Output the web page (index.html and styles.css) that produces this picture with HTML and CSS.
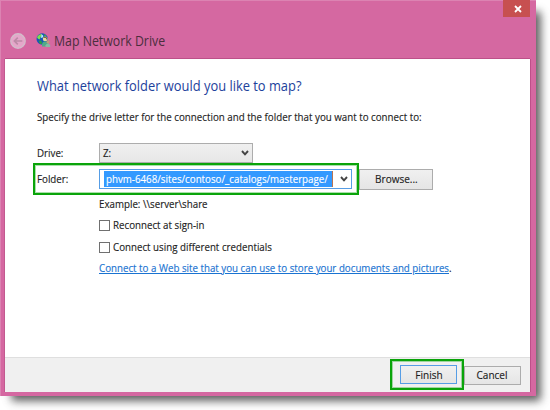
FILE: index.html
```html
<!DOCTYPE html>
<html lang="en">
<head>
<meta charset="utf-8">
<title>Map Network Drive</title>
<link rel="stylesheet" href="styles.css">
</head>
<body>
<main class="window">
  <header class="titlebar">
    <button class="close" aria-label="Close">
      <svg width="8" height="8" viewBox="0 0 8 8"><path d="M1 1 7 7M7 1 1 7" stroke="#fff" stroke-width="1.8" fill="none"/></svg>
    </button>
    <div class="caption">
      <svg class="back" width="16" height="16" viewBox="0 0 16 16" fill="none">
        <circle cx="8" cy="8" r="7.2" fill="#e5a6c9" stroke="#d3bcca" stroke-width="1.4"/>
        <path d="M12.3 8H4.5M7.8 4.6 4.4 8l3.4 3.4" stroke="#bd8aa6" stroke-width="1.7"/>
      </svg>
      <svg class="globe" width="15" height="15" viewBox="0 0 15 15">
        <circle cx="6.2" cy="6" r="5.7" fill="#1656b8"/>
        <path d="M1 4Q3 .8 6 1L5 3.4 3.5 6.4 1.8 5.6Z" fill="#7ee04c"/>
        <path d="M2.5 7.5 5.5 7.8 6.2 10.8 4 11Z" fill="#2c9c45"/>
        <path d="M5.5 1.2Q7.8 2 7.2 4.2L5 5Z" fill="#b9efff"/>
        <path d="M7.8 1.2 10.5 2.6 8.5 3.4Z" fill="#44a83e"/>
        <circle cx="9.2" cy="5.9" r="2.4" fill="#ead7a0"/>
        <path d="M7 5Q8.5 2.5 11.2 4.7L11 7 9.5 4.8Z" fill="#6f5c38"/>
        <path d="M6 13.4V11Q6.5 8.3 9 8.2 11.5 8.4 12.2 10.7V13.4Z" fill="#4eaa88"/>
        <circle cx="12" cy="8.8" r="1.6" fill="#c09c78"/>
        <path d="M9.6 14V12.3Q10.2 10.4 12.2 10.5 14 10.8 14.2 12.5V14Z" fill="#86b9a3"/>
      </svg>
      <h1 class="title">Map Network Drive</h1>
    </div>
  </header>
  <section class="content">
    <h2 class="heading">What network folder would you like to map?</h2>
    <p class="intro narrow">Specify the drive letter for the connection and the folder that you want to connect to:</p>
    <div class="row drive">
      <span class="label narrow">Drive:</span>
      <div class="combo drive-combo"><span class="narrow">Z:</span>
        <svg class="chevron" width="8" height="6" viewBox="0 0 8 6"><path d="M1 1 4 4.3 7 1" fill="none" stroke="#444" stroke-width="1.9"/></svg>
      </div>
    </div>
    <div class="row folder">
      <div class="highlight folder-highlight">
        <span class="label narrow">Folder:</span>
        <div class="combo folder-combo"><span class="selection"><span class="path narrow">phvm-6468/sites/contoso/_catalogs/masterpage/</span></span>
          <svg class="chevron" width="8" height="6" viewBox="0 0 8 6"><path d="M1 1 4 4.3 7 1" fill="none" stroke="#444" stroke-width="1.9"/></svg>
        </div>
      </div>
      <button class="button browse"><span>Browse...</span></button>
    </div>
    <div class="options">
      <p class="example narrow">Example: \\server\share</p>
      <label class="check"><i class="box"></i><span class="narrow">Reconnect at sign-in</span></label>
      <label class="check"><i class="box"></i><span class="narrow">Connect using different credentials</span></label>
      <p class="website narrow"><a>Connect to a Web site that you can use to store your documents and pictures</a>.</p>
    </div>
  </section>
  <footer class="footer">
    <div class="highlight finish-highlight"><button class="button finish"><span>Finish</span></button></div>
    <button class="button cancel"><span>Cancel</span></button>
  </footer>
</main>
</body>
</html>
```
FILE: styles.css
```css
* { box-sizing: border-box; }
body {
  margin: 0;
  width: 550px;
  height: 410px;
  overflow: hidden;
  background: #fff;
  color: #1c1c1c;
  font: 11px/16px "Open Sans", "Noto Sans", sans-serif;
  white-space: nowrap;
  -webkit-text-stroke: .15px;
}
h1, h2, p { margin: 0; font-weight: 400; }
svg { display: block; flex: none; }
.narrow { display: block; transform: scaleX(.886); transform-origin: 0 50%; }
.window {
  display: flex;
  flex-direction: column;
  width: 536px;
  height: 396px;
  padding: 0 6px 4px 5px;
  background: #d568a1;
  box-shadow: inset 1px 1px 0 #dc83b2, 8px 8px 8px -4px rgba(0,0,0,.55), 8px 9px 10px -3px rgba(0,0,0,.2);
}
.titlebar { display: flex; flex-direction: column; height: 59px; border-bottom: 1px solid #bd5089; }
.close {
  display: flex;
  align-items: center;
  justify-content: center;
  align-self: flex-end;
  width: 27px;
  height: 17px;
  padding: 1px 0 0 2px;
  border: 0;
  background: #c75050;
}
.caption { display: flex; align-items: center; height: 16px; margin: 16px 0 0 5px; }
.globe { margin: -2px 0 0 10px; }
.title { margin-left: 3px; color: #4b2e3d; font-size: 14px; transform: scaleX(.88); transform-origin: 0 50%; -webkit-text-stroke: 0; }
.content { height: 298px; padding: 14px 0 0 32px; background: #fff; box-shadow: -1px 0 0 #c35a90, 1px 0 0 #bd5089; }
.heading { height: 24px; line-height: 24px; color: #1d429c; font-size: 15px; transform: scaleX(.859); transform-origin: 0 50%; -webkit-text-stroke: 0; }
.intro { height: 16px; margin-top: 12px; }
.row { display: flex; }
.drive { height: 20px; margin-top: 18px; align-items: center; }
.label { width: 62px; }
.combo { display: flex; align-items: center; justify-content: space-between; height: 20px; border: 1px solid #adadad; }
.drive-combo { width: 154px; padding: 0 3px; background: linear-gradient(#f0f0f0, #e7e7e7); }
.folder { margin: 0 0 0 -4px; align-items: center; }
.highlight { display: flex; align-items: center; border: 2px solid #0aa40a; box-shadow: inset 0 0 0 1px rgba(10,164,10,.35); }
.folder-highlight { width: 326px; height: 32px; padding-left: 2px; }
.folder-combo { width: 253px; padding: 0 3px 0 4px; border-color: #569de5; background: #fff; }
.selection { display: block; width: 229px; height: 16px; line-height: 15px; padding-left: 2px; background: #3399ff; border-right: 1px solid #b87453; color: #fff; }
.path { width: 100px; }
.button {
  display: flex;
  align-items: center;
  justify-content: center;
  padding: 0;
  border: 1px solid #acacac;
  background: linear-gradient(#f0f0f0, #e5e5e5);
  color: #1c1c1c;
  font: inherit;
}
.button span { transform: scaleX(.91); }
.browse { width: 74px; height: 21px; }
.options { margin-left: 62px; }
.example { margin-top: 1px; height: 18px; }
.check { display: flex; align-items: center; height: 22px; }
.box { width: 11px; height: 11px; margin-right: 3px; border: 1px solid #707070; background: #fff; }
.website { margin-top: 2px; }
.website a { color: #1a73d1; text-decoration: underline; }
.footer {
  display: flex;
  height: 35px;
  padding-right: 9px;
  justify-content: flex-end;
  align-items: center;
  border-top: 1px solid #dfdfdf;
  background: #f0f0f0;
  box-shadow: -1px 0 0 #c35a90, 1px 0 0 #bd5089;
}
.finish-highlight { width: 74px; height: 31px; padding-left: 8px; margin-top: -1px; }
.finish { width: 57px; height: 19px; border-color: #569de5; }
.cancel { width: 57px; height: 19px; }
```
